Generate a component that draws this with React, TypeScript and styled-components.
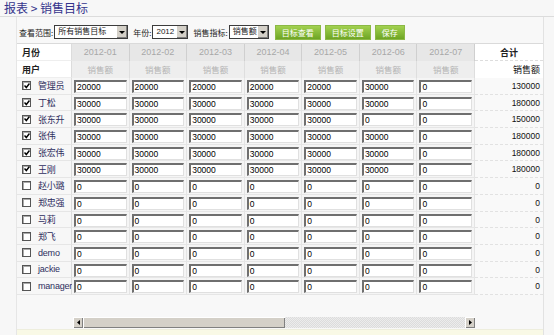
import { styled, createGlobalStyle } from 'styled-components';

const GlobalStyle = createGlobalStyle`
  body {
    margin: 0;
    background: #f7f7f7;
    font-family: 'Liberation Sans', 'Noto Sans CJK SC', sans-serif;
    font-size: 9px;
    color: #222;
  }
`;

const months = ['2012-01', '2012-02', '2012-03', '2012-04', '2012-05', '2012-06', '2012-07'];

type Row = { name: string; checked: boolean; values: number[]; total: number };

const rows: Row[] = [
  { name: '管理员', checked: true, values: [20000, 20000, 20000, 20000, 20000, 30000, 0], total: 130000 },
  { name: '丁松', checked: true, values: [30000, 30000, 30000, 30000, 30000, 30000, 0], total: 180000 },
  { name: '张东升', checked: true, values: [30000, 30000, 30000, 30000, 30000, 0, 0], total: 150000 },
  { name: '张伟', checked: true, values: [30000, 30000, 30000, 30000, 30000, 30000, 0], total: 180000 },
  { name: '张宏伟', checked: true, values: [30000, 30000, 30000, 30000, 30000, 30000, 0], total: 180000 },
  { name: '王刚', checked: true, values: [30000, 30000, 30000, 30000, 30000, 30000, 0], total: 180000 },
  { name: '赵小璐', checked: false, values: [0, 0, 0, 0, 0, 0, 0], total: 0 },
  { name: '郑忠强', checked: false, values: [0, 0, 0, 0, 0, 0, 0], total: 0 },
  { name: '马莉', checked: false, values: [0, 0, 0, 0, 0, 0, 0], total: 0 },
  { name: '郑飞', checked: false, values: [0, 0, 0, 0, 0, 0, 0], total: 0 },
  { name: 'demo', checked: false, values: [0, 0, 0, 0, 0, 0, 0], total: 0 },
  { name: 'jackie', checked: false, values: [0, 0, 0, 0, 0, 0, 0], total: 0 },
  { name: 'manager', checked: false, values: [0, 0, 0, 0, 0, 0, 0], total: 0 },
];

const Select = ({ value, width }: { value: string; width: number }) => (
  <SelectBox $width={width}>
    <SelectValue>{value}</SelectValue>
    <SelectArrow>
      <svg width="6" height="3" viewBox="0 0 6 3">
        <path d="M0 0h6L3 3z" fill="#000" />
      </svg>
    </SelectArrow>
  </SelectBox>
);

const Check = ({ checked }: { checked: boolean }) => (
  <CheckBox>
    {checked && (
      <svg width="6" height="6" viewBox="0 0 6 6">
        <path d="M0.5 2.5l1.8 2 3.2-4" stroke="#000" strokeWidth="1.5" fill="none" />
      </svg>
    )}
  </CheckBox>
);

const App = () => {
  return (
    <>
      <GlobalStyle />
      <Page>
        <Title>报表 &gt; 销售目标</Title>
        <Body>
          <Content>
            <Toolbar>
              <Label>查看范围:</Label>
              <Select value="所有销售目标" width={74} />
              <Label $gap={5}>年份:</Label>
              <Select value="2012" width={36} />
              <Label $gap={5}>销售指标:</Label>
              <Select value="销售额" width={40} />
              <GreenButton $gap={6}>目标查看</GreenButton>
              <GreenButton $gap={4}>目标设置</GreenButton>
              <GreenButton $gap={4}>保存</GreenButton>
            </Toolbar>
            <Table>
              <HeadRow>
                <NameHead>月份</NameHead>
                {months.map((m) => (
                  <MonthHead key={m}>{m}</MonthHead>
                ))}
                <TotalHead>合计</TotalHead>
              </HeadRow>
              <HeadRow>
                <NameHead>用户</NameHead>
                {months.map((m) => (
                  <MetricHead key={m}>销售额</MetricHead>
                ))}
                <TotalMetric>销售额</TotalMetric>
              </HeadRow>
              {rows.map((r) => (
                <DataRow key={r.name}>
                  <NameCell>
                    <Check checked={r.checked} />
                    <UserName>{r.name}</UserName>
                  </NameCell>
                  {r.values.map((v, i) => (
                    <ValueCell key={i}>
                      <ValueInput>{v}</ValueInput>
                    </ValueCell>
                  ))}
                  <TotalCell>{r.total}</TotalCell>
                </DataRow>
              ))}
            </Table>
            <ScrollArea>
              <Scrollbar>
                <ScrollBtn>
                  <svg width="3" height="5" viewBox="0 0 3 5">
                    <path d="M3 0v5L0 2.5z" fill="#000" />
                  </svg>
                </ScrollBtn>
                <ScrollThumb />
                <ScrollTrack />
                <ScrollBtn>
                  <svg width="3" height="5" viewBox="0 0 3 5">
                    <path d="M0 0v5l3-2.5z" fill="#000" />
                  </svg>
                </ScrollBtn>
              </Scrollbar>
            </ScrollArea>
            <Footer />
          </Content>
        </Body>
      </Page>
    </>
  );
};

export default App;

const Page = styled.div`
  width: 554px;
  height: 335px;
  overflow: hidden;
  display: flex;
  flex-direction: column;
`;

const Title = styled.div`
  height: 17px;
  flex-shrink: 0;
  padding-left: 4px;
  line-height: 16px;
  font-family: 'Noto Sans CJK SC', sans-serif;
  font-size: 12px;
  color: #34348c;
  border-bottom: 1px solid #dcdcdc;
  box-sizing: border-box;
`;

const Body = styled.div`
  flex: 1;
  display: flex;
  padding-left: 16px;
  min-height: 0;
`;

const Content = styled.div`
  width: 528px;
  display: flex;
  flex-direction: column;
  border-left: 1px solid #e6e6e6;
  border-right: 1px solid #e2e2e2;
  box-sizing: border-box;
  background: #f8f8f8;
`;

const Toolbar = styled.div`
  display: flex;
  align-items: center;
  height: 14px;
  margin-top: 8px;
  padding-left: 2px;
`;

const Label = styled.span<{ $gap?: number }>`
  font-family: 'Noto Sans CJK SC', sans-serif;
  font-size: 8px;
  color: #222;
  white-space: nowrap;
  margin-left: ${(p) => p.$gap ?? 0}px;
  margin-right: 1px;
`;

const SelectBox = styled.div<{ $width: number }>`
  width: ${(p) => p.$width}px;
  height: 14px;
  flex-shrink: 0;
  display: flex;
  border: 1px solid #3c3c3c;
  background: #fff;
  box-sizing: border-box;
`;

const SelectValue = styled.div`
  flex: 1;
  padding-left: 3px;
  font-family: 'Liberation Sans', 'Noto Sans CJK SC', sans-serif;
  font-size: 8px;
  line-height: 12px;
  white-space: nowrap;
  overflow: hidden;
`;

const SelectArrow = styled.div`
  width: 10px;
  display: flex;
  align-items: center;
  justify-content: center;
  background: #d4d0c8;
  border-left: 1px solid #fff;
  box-shadow: inset -1px -1px 0 #808080;
`;

const GreenButton = styled.div<{ $gap: number }>`
  margin-left: ${(p) => p.$gap}px;
  height: 13px;
  padding: 0 6px;
  display: flex;
  align-items: center;
  font-family: 'Noto Sans CJK SC', sans-serif;
  font-size: 8px;
  color: #fff;
  white-space: nowrap;
  background: linear-gradient(#a2d150, #6ea524);
  border: 1px solid #8bb845;
`;

const Table = styled.div`
  margin-top: 4px;
  display: flex;
  flex-direction: column;
  border-top: 1px solid #dadada;
`;

const HeadRow = styled.div`
  display: flex;
  height: 17px;
`;

const NameHead = styled.div`
  width: 55px;
  flex-shrink: 0;
  padding-left: 5px;
  box-sizing: border-box;
  font-family: 'Noto Sans CJK SC', sans-serif;
  font-size: 9px;
  font-weight: bold;
  line-height: 17px;
  background: #fff;
  border-right: 1px solid #dcdcdc;
  border-bottom: 1px solid #eee;
`;

const MonthHead = styled.div`
  width: 57.6px;
  box-sizing: border-box;
  text-align: center;
  font-size: 9px;
  line-height: 17px;
  color: #a8a8a8;
  background: #e7e7e7;
  border-right: 1px solid #cfcfcf;
`;

const MetricHead = styled.div`
  width: 57.6px;
  box-sizing: border-box;
  text-align: center;
  font-family: 'Noto Sans CJK SC', sans-serif;
  font-size: 8.5px;
  line-height: 17px;
  color: #b4b4b4;
  background: #eeeeee;
  border-right: 1px solid #dedede;
`;

const TotalHead = styled.div`
  width: 68px;
  box-sizing: border-box;
  text-align: center;
  font-family: 'Noto Sans CJK SC', sans-serif;
  font-size: 9px;
  font-weight: bold;
  line-height: 17px;
  background: #fff;
  border-bottom: 1px dashed #ddd;
`;

const TotalMetric = styled.div`
  width: 68px;
  box-sizing: border-box;
  text-align: right;
  padding-right: 3px;
  font-family: 'Noto Sans CJK SC', sans-serif;
  font-size: 9px;
  line-height: 17px;
  color: #111;
  background: #fff;
`;

const DataRow = styled.div`
  display: flex;
  height: 16.7px;
`;

const NameCell = styled.div`
  width: 55px;
  flex-shrink: 0;
  display: flex;
  align-items: center;
  box-sizing: border-box;
  padding-left: 5px;
  background: #f7f7f7;
  border-right: 1px solid #dcdcdc;
  border-bottom: 1px solid #e6e6e6;
`;

const CheckBox = styled.span`
  width: 7px;
  height: 7px;
  flex-shrink: 0;
  display: flex;
  align-items: center;
  justify-content: center;
  border: 1px solid #555;
  background: #fff;
  box-shadow: inset 1px 1px 0 #aaa;
`;

const UserName = styled.span`
  margin-left: 7px;
  font-family: 'Liberation Sans', 'Noto Sans CJK SC', sans-serif;
  font-size: 9px;
  letter-spacing: -0.2px;
  color: #2e2e5e;
  white-space: nowrap;
`;

const ValueCell = styled.div`
  width: 57.6px;
  box-sizing: border-box;
  padding: 2px 2px 0 2px;
  background: #f5f5f5;
  border-right: 1px solid #e4e4e4;
  border-bottom: 1px solid #e6e6e6;
`;

const ValueInput = styled.div`
  height: 13px;
  box-sizing: border-box;
  padding-left: 1px;
  font-size: 8.5px;
  line-height: 10px;
  color: #000;
  background: #fff;
  border-top: 2px solid #6f6f6f;
  border-left: 2px solid #6f6f6f;
  border-right: 1px solid #e0e0e0;
  border-bottom: 1px solid #e0e0e0;
`;

const TotalCell = styled.div`
  width: 68px;
  box-sizing: border-box;
  text-align: right;
  padding-right: 3px;
  font-size: 8.5px;
  line-height: 16px;
  color: #111;
  background: #f9f9f9;
  border-bottom: 1px dashed #e2e2e2;
`;

const ScrollArea = styled.div`
  flex: 1;
  display: flex;
  align-items: flex-end;
  padding-left: 56px;
  padding-bottom: 1px;
`;

const Scrollbar = styled.div`
  width: 402px;
  height: 11px;
  display: flex;
  background: #e8e8e8;
`;

const ScrollBtn = styled.div`
  width: 10px;
  display: flex;
  align-items: center;
  justify-content: center;
  background: #d4d0c8;
  box-shadow: inset 1px 1px 0 #fff, inset -1px -1px 0 #808080;
`;

const ScrollThumb = styled.div`
  width: 202px;
  background: #d4d0c8;
  box-shadow: inset 1px 1px 0 #fff, inset -1px -1px 0 #808080;
`;

const ScrollTrack = styled.div`
  flex: 1;
  background-color: #e6e6e6;
  background-image: repeating-conic-gradient(#dcdcdc 0 25%, #ececec 0 50%);
  background-size: 2px 2px;
`;

const Footer = styled.div`
  height: 5px;
  flex-shrink: 0;
  background: #f9f9e6;
  border-top: 1px solid #eeeedd;
`;
